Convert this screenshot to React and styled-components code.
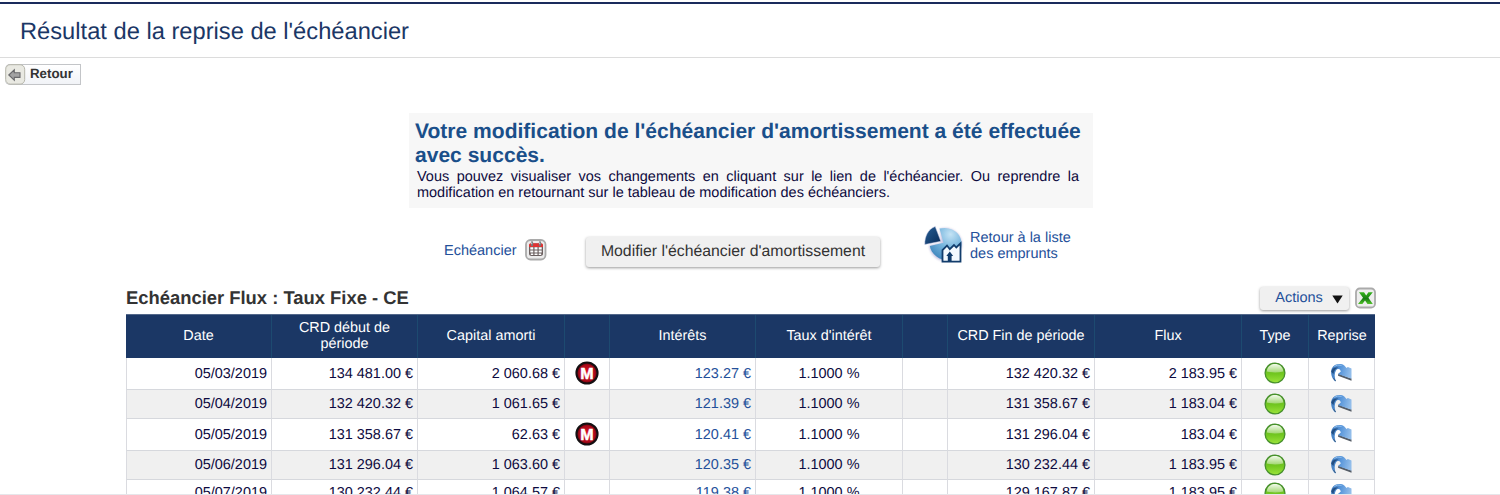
import React from 'react'
import styled, { createGlobalStyle } from 'styled-components'

const GlobalStyle = createGlobalStyle`
    body {
        margin: 0;
        background: #ffffff;
        font-family: 'Liberation Sans', Arial, sans-serif;
        text-rendering: geometricPrecision;
        overflow: hidden;
    }
    * {
        box-sizing: border-box;
    }
`

const Wrapper = styled.div`
    width: 1500px;
    height: 493px;
    margin-top: 2px;
    overflow: hidden;
    display: flex;
    flex-direction: column;
    border-top: 2px solid #1a2b5c;
    border-bottom: 1px solid #e6e6ea;
`

const Header = styled.div`
    flex: none;
    height: 54px;
    padding: 14px 0 0 20px;
    border-bottom: 1px solid #dcdcdc;
    color: #1b3766;
    font-size: 23.7px;
    line-height: 28px;
`

const BackBar = styled.div`
    flex: none;
    height: 55px;
    padding: 6px 0 0 5px;
`

const BackButton = styled.div`
    display: flex;
    width: 76px;
    height: 21px;
    border: 1px solid #c3c5c8;
    border-left: none;
    border-radius: 5px 0 0 5px;
    background: linear-gradient(#ffffff, #f1f3f7);
    color: #333333;
    font-size: 13.3px;
    font-weight: bold;
    line-height: 18px;
    gap: 4px;

    svg {
        margin-top: -1px;
    }
`

const Message = styled.div`
    flex: none;
    width: 684px;
    height: 95px;
    margin-left: 409px;
    padding: 7px 12px 0 6px;
    background: #f7f7f7;
`

const MessageTitle = styled.div`
    color: #1a4f8a;
    font-size: 21.05px;
    font-weight: bold;
    line-height: 24px;
    white-space: nowrap;
`

const MessageText = styled.div`
    width: 662px;
    margin: 1px 0 0 2px;
    color: #0d0a40;
    font-size: 14.48px;
    line-height: 16px;
    text-align: justify;
`

const Links = styled.div`
    flex: none;
    display: flex;
    height: 79px;
    padding-left: 444px;
`

const LinkText = styled.div`
    color: #24509a;
    font-size: 14.5px;
    line-height: 16px;
    width: ${(props) => props.$width}px;
    margin-top: ${(props) => props.$top}px;
`

const IconBox = styled.div`
    flex: none;
    height: ${(props) => props.$size}px;
    width: ${(props) => props.$size}px;
    margin: ${(props) => props.$margin};
`

const Button = styled.div`
    height: ${(props) => props.$height}px;
    width: ${(props) => props.$width}px;
    display: flex;
    align-items: center;
    justify-content: center;
    border-radius: 3px;
    background: #f0f0f0;
    box-shadow: 0 1px 3px rgba(0, 0, 0, 0.4);
    white-space: nowrap;
`

const ModifyButton = styled(Button)`
    margin: 29px 44px 0 39px;
    color: #333333;
    font-size: 15.8px;
`

const ActionsButton = styled(Button)`
    color: #24509a;
    font-size: 14.5px;
    gap: 9px;
    padding: 0 0 2px 9px;

    svg {
        margin-top: 3px;
    }
`

const TableBar = styled.div`
    flex: none;
    display: flex;
    width: 1250px;
    height: 27px;
    margin-left: 126px;
    justify-content: space-between;
`

const TableTitle = styled.div`
    color: #333333;
    font-size: 18.4px;
    font-weight: bold;
    line-height: 21px;
`

const Tools = styled.div`
    display: flex;
    gap: 6px;
`

const Row = styled.div`
    flex: none;
    display: grid;
    grid-template-columns: 146px 146px 147px 45px 146px 147px 45px 147px 147px 67px 66px;
    width: 1249px;
    margin-left: 126px;
    height: ${(props) => props.$height}px;
    background: ${(props) => (props.$odd ? '#f0f0f0' : '#ffffff')};
`

const Head = styled(Row)`
    height: 44px;
    border-top: 1px solid #53688a;
    background: #1b3765;
`

const HeadCell = styled.div`
    display: flex;
    align-items: center;
    justify-content: center;
    padding: 0 20px;
    padding-bottom: 1px;
    border-right: 1px solid #1d4a70;
    color: #ffffff;
    font-size: 14.4px;
    line-height: 16px;
    text-align: center;
    white-space: ${(props) => (props.$wrap ? 'normal' : 'nowrap')};

    &:last-child {
        border-right: none;
    }
`

const Cell = styled.div`
    display: flex;
    align-items: center;
    justify-content: ${(props) => props.$align || 'flex-end'};
    padding-right: ${(props) => (props.$align ? 0 : 4)}px;
    border-right: 1px solid #dadbe0;
    border-bottom: 1px solid #d6d8dd;
    color: ${(props) => (props.$link ? '#24509a' : '#0d0a40')};
    font-size: 14.45px;
    line-height: 16px;
    white-space: nowrap;

    &:first-child {
        border-left: 1px solid #dadbe0;
    }

    svg {
        margin: 0 1px 1px 0;
    }
`

const columns = [
    'Date',
    'CRD début de période',
    'Capital amorti',
    '',
    'Intérêts',
    "Taux d'intérêt",
    '',
    'CRD Fin de période',
    'Flux',
    'Type',
    'Reprise',
]

const rows = [
    ['05/03/2019', '134 481.00 €', '2 060.68 €', true, '123.27 €', '132 420.32 €', '2 183.95 €', 32],
    ['05/04/2019', '132 420.32 €', '1 061.65 €', false, '121.39 €', '131 358.67 €', '1 183.04 €', 29],
    ['05/05/2019', '131 358.67 €', '62.63 €', true, '120.41 €', '131 296.04 €', '183.04 €', 32],
    ['05/06/2019', '131 296.04 €', '1 063.60 €', false, '120.35 €', '130 232.44 €', '1 183.95 €', 29],
    ['05/07/2019', '130 232.44 €', '1 064.57 €', false, '119.38 €', '129 167.87 €', '1 183.95 €', 27],
]

const BackIcon = () => (
    <svg width="21" height="21" viewBox="0 0 21 21">
        <rect x="0.7" y="0.7" width="19" height="19.4" rx="4.5" fill="#e9e9e2" stroke="#b6b6ab" />
        <path
            d="M3.8 11 L9.3 5.8 V8.8 H15 V13.4 H9.3 V16.2 Z"
            fill="#a2a2a2"
            stroke="#69696c"
            strokeWidth="1.1"
        />
    </svg>
)

const CalendarIcon = () => (
    <svg width="22" height="22" viewBox="0 0 22 22">
        <rect x="1" y="1" width="19.5" height="19.5" rx="4.5" fill="#ececec" stroke="#aaaaaa" strokeWidth="1.8" />
        <rect x="4" y="4.5" width="14" height="12.5" rx="2.5" fill="#6b6060" />
        <path d="M4 8 V6 Q4 4.3 6 4.3 H16 Q18 4.3 18 6 V8 Z" fill="#df3434" />
        <path
            d="M5.3 8.3h3v2.2h-3z M9.5 8.3h3v2.2h-3z M13.7 8.3h3v2.2h-3z M5.3 11.4h3v2.2h-3z M9.5 11.4h3v2.2h-3z M13.7 11.4h3v2.2h-3z M5.8 14.5h2.5v1.5H5.8z M9.5 14.5h3v1.5h-3z M13.7 14.5h2.5v1.5h-2.5z"
            fill="#ffffff"
        />
        <path d="M7 3.4v2.8M15 3.4v2.8" stroke="#77777a" strokeWidth="2.2" strokeLinecap="round" />
        <path d="M6.7 3.4v1.8M14.7 3.4v1.8" stroke="#dddddd" strokeWidth="0.9" />
    </svg>
)

const LoansIcon = () => (
    <svg width="40" height="40" viewBox="0 0 40 40">
        <defs>
            <radialGradient id="pie" cx="0.65" cy="0.2" r="0.85">
                <stop offset="0" stopColor="#c4e3f5" />
                <stop offset="0.5" stopColor="#76b5dd" />
                <stop offset="1" stopColor="#3f86bd" />
            </radialGradient>
            <linearGradient id="slice" x1="0" y1="0" x2="1" y2="1">
                <stop offset="0" stopColor="#286096" />
                <stop offset="1" stopColor="#082b58" />
            </linearGradient>
            <filter id="soft" x="-20%" y="-20%" width="140%" height="140%">
                <feGaussianBlur stdDeviation="1.2" />
            </filter>
        </defs>
        <path
            d="M16 3.5 L17 18 L5 20.5 C6 29 13 36 21 36 C32 36 38 27 38 19 C38 10 30 3 21 3 Z"
            fill="#a7a3d2"
            opacity="0.65"
            filter="url(#soft)"
        />
        <path
            d="M15.5 3.6 Q22 1.8 28 4.5 C34.5 7.5 38 13 37.5 20 C37 29 30 35.5 22 35 C13.5 34.5 7 28 5.8 21 L19.5 17.8 Z"
            fill="url(#pie)"
        />
        <path d="M11.2 1.5 L16.8 16.3 L0.8 19.5 C0.5 11.5 4.2 4 11.2 1.5 Z" fill="url(#slice)" stroke="#c8cbe6" strokeWidth="0.5" />
        <path
            d="M18.5 36.7 V25 L23 20.5 L25.8 24.2 L30 20 L32.3 22.5 L36.5 18.4 V36.7 Z"
            fill="#f4faff"
            stroke="#123d6c"
            strokeWidth="1.8"
        />
        <path d="M25.8 26.5 L29.2 31 H27.6 V36 H23.8 V31 H22.3 Z" fill="#123d6c" />
    </svg>
)

const ExcelIcon = () => (
    <svg width="21" height="22" viewBox="0 0 21 22">
        <defs>
            <linearGradient id="xl" x1="0" y1="0" x2="0" y2="1">
                <stop offset="0" stopColor="#36b51e" />
                <stop offset="0.55" stopColor="#167c12" />
                <stop offset="1" stopColor="#52c42a" />
            </linearGradient>
        </defs>
        <rect x="1" y="1.5" width="19" height="19" rx="3.8" fill="#eeeeee" stroke="#aaaaaa" strokeWidth="1.8" />
        <path d="M4 5.2 H9 L11.2 8.4 L13.4 5.2 H17.8 L13.4 10.7 L17.8 17 H12.5 L10 13.4 L7.4 17 H3 L8 10.7 Z" fill="url(#xl)" />
    </svg>
)

const ModifiedIcon = () => (
    <svg width="24" height="24" viewBox="0 0 24 24">
        <defs>
            <radialGradient id="red">
                <stop offset="0.2" stopColor="#d80d22" />
                <stop offset="0.75" stopColor="#a90a1a" />
                <stop offset="1" stopColor="#4c0008" />
            </radialGradient>
        </defs>
        <circle cx="12" cy="12" r="10.6" fill="url(#red)" stroke="#141012" strokeWidth="2" />
        <text
            x="12"
            y="18"
            textAnchor="middle"
            fontFamily="Liberation Sans"
            fontSize="16"
            fontWeight="bold"
            fill="#ffffff"
            stroke="#ffffff"
            strokeWidth="0.5"
        >
            M
        </text>
    </svg>
)

const StatusIcon = () => (
    <svg width="22" height="22" viewBox="0 0 22 22">
        <defs>
            <linearGradient id="green" x1="0" y1="0" x2="0" y2="1">
                <stop offset="0" stopColor="#59ad26" />
                <stop offset="0.55" stopColor="#72c720" />
                <stop offset="1" stopColor="#9be43b" />
            </linearGradient>
            <linearGradient id="shine" x1="0" y1="0" x2="0" y2="1">
                <stop offset="0" stopColor="#f2faec" />
                <stop offset="1" stopColor="#a3d874" />
            </linearGradient>
        </defs>
        <circle cx="11" cy="11" r="9.9" fill="url(#green)" stroke="#458e2c" strokeWidth="1.3" />
        <path d="M2.7 9.4 C3 4.5 7 2 11 2 C15 2 19 4.5 19.3 9.4 Q11 11.4 2.7 9.4 Z" fill="url(#shine)" />
    </svg>
)

const RepriseIcon = () => (
    <svg width="22" height="20" viewBox="0 0 22 20">
        <defs>
            <linearGradient id="arrow" x1="0" y1="0" x2="1" y2="0.2">
                <stop offset="0" stopColor="#3e78b8" />
                <stop offset="0.5" stopColor="#5795da" />
                <stop offset="1" stopColor="#92bdea" />
            </linearGradient>
        </defs>
        <path d="M8.3 10.8 L21.5 15.6 V17.8 L8 12.7 Z" fill="#555c66" />
        <path
            d="M5 18.3 C1.5 15 0.3 9.5 1.8 5.4 C3.6 1.8 7.5 0.4 11 1.1 C14 1.5 15 3.6 16.6 4.9 L17.8 3.9 L21.5 5.4 V15.8 L8 11 L10.8 8.6 C10.2 5.6 7.6 5.4 6 7.6 C4.3 10.3 4.2 14.5 6 18.3 Z"
            fill="url(#arrow)"
        />
        <path d="M1.2 8.8 C1.8 5.4 4.6 3.6 8.4 4.8 C5.8 5.5 3.8 7.6 3.4 11 Z" fill="#234f83" />
        <path d="M4.2 3.4 Q7.6 1.2 11.6 2.4" stroke="#8fc0ef" fill="none" />
        <path d="M3.6 15.2 L5.6 18" stroke="#3c5d80" fill="none" />
    </svg>
)

const Arrow = () => (
    <svg width="11" height="10" viewBox="0 0 11 10">
        <path d="M0.3 1.5 H10.7 L5.5 9.5 Z" fill="#111111" />
    </svg>
)

const App = () => {
    return (
        <>
            <GlobalStyle />
            <Wrapper>
                <Header>Résultat de la reprise de l'échéancier</Header>
                <BackBar>
                    <BackButton>
                        <BackIcon />
                        Retour
                    </BackButton>
                </BackBar>
                <Message>
                    <MessageTitle>
                        Votre modification de l'échéancier d'amortissement a été effectuée
                        <br />
                        avec succès.
                    </MessageTitle>
                    <MessageText>
                        Vous pouvez visualiser vos changements en cliquant sur le lien de l'échéancier. Ou reprendre la
                        modification en retournant sur le tableau de modification des échéanciers.
                    </MessageText>
                </Message>
                <Links>
                    <LinkText $width={73} $top={35}>
                        Echéancier
                    </LinkText>
                    <IconBox $size={22} $margin="31px 0 0 8px">
                        <CalendarIcon />
                    </IconBox>
                    <ModifyButton $width={294} $height={30}>
                        Modifier l'échéancier d'amortissement
                    </ModifyButton>
                    <IconBox $size={40} $margin="17px 6px 0 0">
                        <LoansIcon />
                    </IconBox>
                    <LinkText $width={104} $top={22}>
                        Retour à la liste
                        <br />
                        des emprunts
                    </LinkText>
                </Links>
                <TableBar>
                    <TableTitle>Echéancier Flux : Taux Fixe - CE</TableTitle>
                    <Tools>
                        <ActionsButton $width={89} $height={23}>
                            Actions
                            <Arrow />
                        </ActionsButton>
                        <ExcelIcon />
                    </Tools>
                </TableBar>
                <Head>
                    {columns.map((name, i) => (
                        <HeadCell key={i} $wrap={i === 1}>
                            {name}
                        </HeadCell>
                    ))}
                </Head>
                {rows.map(([date, start, capital, modified, interest, end, flux, height], i) => (
                    <Row key={date} $odd={i % 2 === 1} $height={height}>
                        <Cell>{date}</Cell>
                        <Cell>{start}</Cell>
                        <Cell>{capital}</Cell>
                        <Cell $align="center">{modified && <ModifiedIcon />}</Cell>
                        <Cell $link>{interest}</Cell>
                        <Cell $align="center">1.1000 %</Cell>
                        <Cell />
                        <Cell>{end}</Cell>
                        <Cell>{flux}</Cell>
                        <Cell $align="center">
                            <StatusIcon />
                        </Cell>
                        <Cell $align="center">
                            <RepriseIcon />
                        </Cell>
                    </Row>
                ))}
            </Wrapper>
        </>
    )
}

export default App
